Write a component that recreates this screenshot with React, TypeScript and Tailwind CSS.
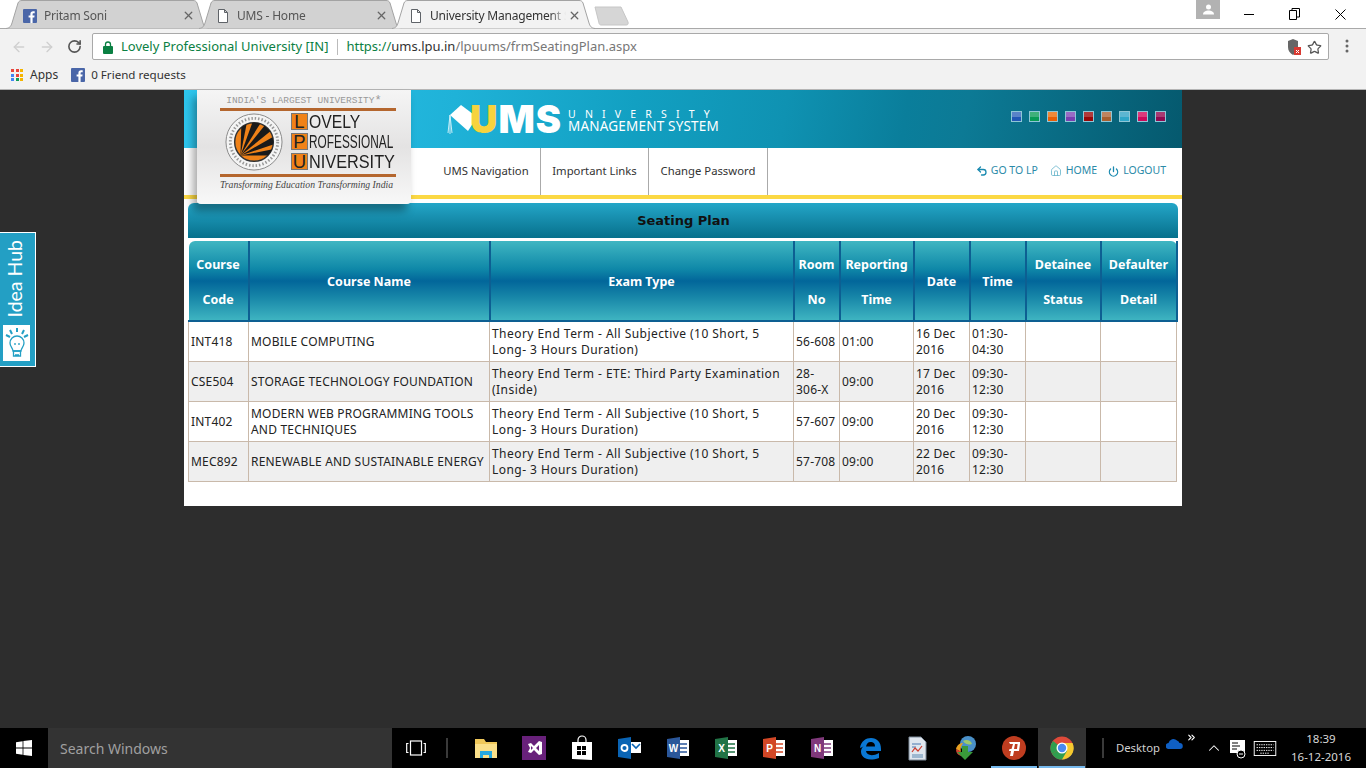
import { ArrowLeft, ArrowRight, ChevronUp, ChevronsRight, Home, Power, RotateCw, Star, Undo2, X } from "lucide-react";

const ui = "font-['Noto_Sans',sans-serif]";

const swatches = [
  "bg-[linear-gradient(#5a83c8_50%,#2257b5_50%)]",
  "bg-[linear-gradient(#3fb07a_50%,#079a55_50%)]",
  "bg-[linear-gradient(#ef8a3a_50%,#e85f06_50%)]",
  "bg-[linear-gradient(#9a6cc4_50%,#7a3fb0_50%)]",
  "bg-[linear-gradient(#b03a3a_50%,#970808_50%)]",
  "bg-[linear-gradient(#bf8560_50%,#a8602f_50%)]",
  "bg-[linear-gradient(#5cb6d2_50%,#2fa6c8_50%)]",
  "bg-[linear-gradient(#dc3a7c_50%,#cc0a5a_50%)]",
  "bg-[linear-gradient(#a83a72_50%,#8f0a50_50%)]",
];

const rows = [
  ["INT418", "MOBILE COMPUTING", "Theory End Term - All Subjective (10 Short, 5 Long- 3 Hours Duration)", "56-608", "01:00", "16 Dec 2016", "01:30-04:30"],
  ["CSE504", "STORAGE TECHNOLOGY FOUNDATION", "Theory End Term - ETE: Third Party Examination (Inside)", "28-306-X", "09:00", "17 Dec 2016", "09:30-12:30"],
  ["INT402", "MODERN WEB PROGRAMMING TOOLS AND TECHNIQUES", "Theory End Term - All Subjective (10 Short, 5 Long- 3 Hours Duration)", "57-607", "09:00", "20 Dec 2016", "09:30-12:30"],
  ["MEC892", "RENEWABLE AND SUSTAINABLE ENERGY", "Theory End Term - All Subjective (10 Short, 5 Long- 3 Hours Duration)", "57-708", "09:00", "22 Dec 2016", "09:30-12:30"],
];

const heads = [
  ["Course", "Code"],
  ["Course Name"],
  ["Exam Type"],
  ["Room", "No"],
  ["Reporting", "Time"],
  ["Date"],
  ["Time"],
  ["Detainee", "Status"],
  ["Defaulter", "Detail"],
];

const colWidths = ["w-[60px]", "w-[241px]", "w-[304px]", "w-[46px]", "w-[74px]", "w-[56px]", "w-[56px]", "w-[75px]", "w-[76px]"];

function FbIcon({ size = 14 }: { size?: number }) {
  return (
    <svg width={size} height={size} viewBox="0 0 14 14" className="shrink-0">
      <rect width="14" height="14" fill="#4a66a8" rx="1" />
      <path d="M9.6 14V8.6h1.7l.3-2.1h-2V5.2c0-.6.2-1 1-1h1.1V2.3c-.2 0-.8-.1-1.6-.1-1.6 0-2.7 1-2.7 2.8v1.5H5.6v2.1h1.8V14z" fill="#fff" />
    </svg>
  );
}

function PageIcon() {
  return (
    <svg width="12" height="14" viewBox="0 0 12 14" className="shrink-0" fill="#fff" stroke="#5f6368">
      <path d="M1.5.5h6l3 3v10h-9zM7.5.5v3h3" />
    </svg>
  );
}

function Tab({ title, active, fav }: { title: string; active?: boolean; fav?: boolean }) {
  return (
    <div className="relative -mr-[10px] h-[28px] w-[203px] shrink-0">
      <svg width="203" height="29" viewBox="0 0 203 29" className="absolute left-0 top-0">
        <path
          d="M0 28.5 C4 28 5 26 6 23 L12 3 C13 1 14 .5 16 .5 H187 C189 .5 190 1 191 3 L197 23 C198 26 199 28 203 28.5"
          fill={active ? "#f2f2f2" : "#d2d2d2"}
          stroke="#a3a3a3"
        />
      </svg>
      <div className="relative flex h-full items-center pl-[17px] pr-[14px] pt-[3px]">
        <div className="flex w-[14px] shrink-0 justify-center">{fav ? <FbIcon size={14} /> : <PageIcon />}</div>
        <span className={`ml-[7px] w-[136px] overflow-hidden whitespace-nowrap text-[12px] tracking-[-0.2px] [mask-image:linear-gradient(90deg,#000_88%,transparent)] ${active ? "text-[#333]" : "text-[#555]"}`}>{title}</span>
        <X size={13} strokeWidth={2.4} className="ml-auto text-[#666]" />
      </div>
    </div>
  );
}

function LogoCard() {
  return (
    <div className="absolute left-[13px] top-0 z-10 h-[114px] w-[214px] rounded-b-[4px] bg-gradient-to-b from-[#f5f5f5] via-[#e4e3e3] to-[#f8f8f8] px-[23px] shadow-[-4px_7px_8px_rgba(0,0,0,0.35)]">
      <div className="mt-[4px] flex h-[14px] items-center justify-center whitespace-nowrap font-['Liberation_Mono',monospace] text-[9.5px] text-[#999]">
        INDIA'S LARGEST UNIVERSITY<span className="text-[12px]">*</span>
      </div>
      <div className="h-[3px] w-[176px] bg-[#b4662e]" />
      <div className="mt-[2px] flex h-[61px]">
        <svg width="58" height="58" viewBox="0 0 60 60" className="ml-[5px] shrink-0">
          <defs>
            <clipPath id="sun">
              <circle cx="30" cy="30" r="20" />
            </clipPath>
          </defs>
          <circle cx="30" cy="30" r="29" fill="#f4f4f4" stroke="#888" strokeWidth="1" />
          <circle cx="30" cy="30" r="20" fill="#f08218" stroke="#333" strokeWidth="1.5" />
          <g clipPath="url(#sun)" fill="#1a1a1a">
            <path d="M16 44 17 8 23 8Z" />
            <path d="M16 44 29 8 37 10Z" />
            <path d="M16 44 41 13 47 19Z" />
            <path d="M16 44 49 25 52 32Z" />
            <path d="M16 44 52 37 51 44Z" />
          </g>
          <circle cx="30" cy="30" r="24.500" fill="none" stroke="#999" strokeWidth="3" strokeDasharray="1.5 2" />
        </svg>
        <div className="ml-[8px] flex flex-col font-['Liberation_Sans',sans-serif] text-[18.5px] leading-[17px] text-[#222]">
          {[
            ["L", "OVELY", "scale-x-[0.85]"],
            ["P", "ROFESSIONAL", "scale-x-[0.64]"],
            ["U", "NIVERSITY", "scale-x-[0.88]"],
          ].map(([a, b, s]) => (
            <div key={a} className="mb-[3px] flex h-[17px] items-center">
              <span className="flex h-[17px] w-[17px] shrink-0 items-center justify-center border border-[#777] bg-[#f08218]">{a}</span>
              <span className={`ml-[1px] origin-left whitespace-nowrap ${s}`}>{b}</span>
            </div>
          ))}
        </div>
      </div>
      <div className="h-[3px] w-[176px] bg-[#b4662e]" />
      <div className="mt-[1px] whitespace-nowrap text-center font-['Liberation_Serif',serif] text-[9.7px] italic leading-[14px] text-[#444]">
        Transforming Education Transforming India
      </div>
    </div>
  );
}

function SiteHeader() {
  return (
    <div className="relative h-[58px] bg-[linear-gradient(100deg,#2ec6ee_0%,#1fb2d8_27%,#12a0c2_45%,#0f92b2_60%,#0a7e9b_72%,#0c7a95_78%,#05596e_100%)] pl-[263px]">
      <div className="flex h-full items-center">
        <svg width="30" height="32" viewBox="0 0 30 32" className="mt-[-1px] shrink-0">
          <path d="M3 12 14 2 30 14 21 28Z" fill="#fff" />
          <path d="M3 12 1 30M3 12 3 31M3 12 5 30" stroke="#c8eef8" strokeWidth="1" />
        </svg>
        <div className="-ml-[7px] flex h-[34px] w-[92px] shrink-0 items-center whitespace-nowrap font-['Inter',sans-serif] text-[38px] font-black leading-none tracking-[1px]">
          <span className="text-[#f7d33e]">U</span>
          <span className="text-white">MS</span>
        </div>
        <div className="ml-[6px] mt-[2px] font-['Noto_Sans',sans-serif] text-white">
          <div className="whitespace-nowrap text-[10.5px] leading-[12px] tracking-[9.2px]">UNIVERSITY</div>
          <div className="whitespace-nowrap text-[13.5px] leading-[13px] tracking-[0.2px]">MANAGEMENT SYSTEM</div>
        </div>
      </div>
      <div className="absolute right-[16px] top-[21px] flex gap-[7px]">
        {swatches.map((s) => (
          <div key={s} className={`h-[11px] w-[11px] border border-[#8fc6d6] ${s}`} />
        ))}
      </div>
    </div>
  );
}

function NavBar() {
  return (
    <div className="flex h-[47px] items-stretch bg-white pl-[246px] pr-[16px] text-[11.3px] text-[#333]">
      <div className="flex w-[111px] items-center justify-center border-r border-[#aaa] pl-[2px]">UMS Navigation</div>
      <div className="flex w-[108px] items-center justify-center border-r border-[#aaa]">Important Links</div>
      <div className="flex w-[119px] items-center justify-center border-r border-[#aaa]">Change Password</div>
      <div className="ml-auto flex items-center pb-[1px] text-[10.5px] text-[#2b8aa8]">
        <Undo2 size={12} strokeWidth={2.6} className="mr-[3px] text-[#1a8ab0]" />
        <span>GO TO LP</span>
        <Home size={12} strokeWidth={1.6} className="ml-[12px] mr-[4px] text-[#63b2c9]" />
        <span>HOME</span>
        <Power size={11} strokeWidth={2.8} className="ml-[11px] mr-[4px] text-[#1a8ab0]" />
        <span>LOGOUT</span>
      </div>
    </div>
  );
}

function SeatingTable() {
  return (
    <table className="ml-[4px] w-[988px] table-fixed border-collapse text-[12px]">
      <colgroup>
        {colWidths.map((w, i) => (
          <col key={i} className={w} />
        ))}
      </colgroup>
      <thead>
        <tr className="h-[80px] bg-[linear-gradient(180deg,#40b6c2_0%,#0f88a8_35%,#02669a_50%,#1786a8_70%,#40b6c2_100%)]">
          {heads.map((h, i) => (
            <th key={i} className={`border-b-2 border-r-2 border-[#0d5f92] px-0 pb-0 text-center text-[12.5px] font-bold leading-[35px] text-white ${h.length === 2 ? "pt-[2px]" : "pt-[1px]"} ${i === 0 ? "rounded-tl-[6px]" : ""} ${i === 8 ? "rounded-tr-[6px]" : ""}`}>
              {h.map((t) => (
                <div key={t}>{t}</div>
              ))}
            </th>
          ))}
        </tr>
      </thead>
      <tbody>
        {rows.map((r, i) => (
          <tr key={r[0]} className={`h-[40px] ${i % 2 ? "bg-[#efefef]" : "bg-white"}`}>
            {[...r, "", ""].map((c, j) => (
              <td key={j} className={`border border-t-0 border-[#c9b9aa] px-[2px] pb-0 pt-[1px] align-middle leading-[16px] text-[#222] ${j === 2 ? "tracking-[0.45px]" : "tracking-[0.2px]"}`}>
                {c}
              </td>
            ))}
          </tr>
        ))}
      </tbody>
    </table>
  );
}

function TaskIcon({ children, active, underline }: { children: React.ReactNode; active?: boolean; underline?: boolean }) {
  return (
    <div className={`relative flex h-[40px] w-[48px] items-center justify-center ${active ? "bg-[#333]" : ""}`}>
      {children}
      {underline && <div className="absolute bottom-0 left-[1px] right-[1px] h-[2px] bg-[#76b9ed]" />}
    </div>
  );
}

function OfficeIcon({ bg, letter }: { bg: string; letter: string }) {
  return (
    <svg width="24" height="24" viewBox="0 0 24 24">
      <rect x="11" y="4" width="12" height="16" fill="#fff" />
      <path d="M13 8h8M13 12h8M13 16h8" stroke={bg} strokeWidth="1.5" />
      <path d="M1 3 L14 1 V23 L1 21 Z" fill={bg} />
      <text x="7.5" y="16" textAnchor="middle" fontSize="10" fontWeight="700" fill="#fff" fontFamily="Liberation Sans, sans-serif">{letter}</text>
    </svg>
  );
}

function Taskbar() {
  return (
    <div className={`flex h-[40px] shrink-0 items-center bg-black text-white ${ui}`}>
      <div className="flex w-[48px] justify-center">
        <svg width="16" height="16" viewBox="0 0 16 16" fill="#fff">
          <path d="M0 2.2 6.6 1.2V7.6H0zM7.4 1.1 16 0V7.6H7.4zM0 8.4H6.6V14.8L0 13.8zM7.4 8.4H16V16L7.4 14.9z" />
        </svg>
      </div>
      <div className="flex h-full w-[344px] items-center bg-[#333] pl-[12px] text-[14px] text-[#a0a0a0]">Search Windows</div>
      <TaskIcon>
        <svg width="20" height="16" viewBox="0 0 20 16" fill="none" stroke="#fff" strokeWidth="1.2">
          <rect x="4.5" y="1" width="11" height="14" />
          <path d="M2.5 3.5H.7v9h1.8M17.5 3.5h1.8v9h-1.8" />
        </svg>
      </TaskIcon>
      <div className="flex w-[22px] pl-[6px]">
        <div className="h-[20px] w-[2px] border-x border-[#3a3a3a]" />
      </div>
      <TaskIcon>
        <svg width="24" height="24" viewBox="0 0 24 24">
          <path d="M1 3h9l2 3h11v16H1z" fill="#f0c85a" />
          <path d="M1 8h22v14H1z" fill="#fbe08a" />
          <path d="M6 22v-7h12v7h-3v-3H9v3z" fill="#27a9e1" />
        </svg>
      </TaskIcon>
      <TaskIcon>
        <svg width="24" height="24" viewBox="0 0 24 24">
          <rect width="24" height="24" fill="#68217a" />
          <path d="M6 8 9 7 12 10 17 5 20 6V18L17 19 12 14 9 17 6 16 8 12ZM9 10V14L11 12ZM17 9 14 12 17 15Z" fill="#fff" />
        </svg>
      </TaskIcon>
      <TaskIcon>
        <svg width="22" height="26" viewBox="0 0 22 26" fill="#fff">
          <path d="M7 7V5a4 4 0 0 1 8 0v2" fill="none" stroke="#fff" strokeWidth="1.2" />
          <path d="M1 7h20v18L1 24z" />
          <path d="M6 11h4v4H6zM11 11h4v4h-4zM6 16h4v4H6zM11 16h4v4h-4z" fill="#000" />
        </svg>
      </TaskIcon>
      <TaskIcon>
        <svg width="24" height="24" viewBox="0 0 24 24">
          <path d="M0 3 13 1V23L0 21Z" fill="#0a64b4" />
          <rect x="13" y="6" width="10" height="11" fill="#fff" />
          <path d="M14 8l4 4 4-4" fill="none" stroke="#0a64b4" strokeWidth="1.6" />
          <circle cx="6.5" cy="12" r="3" fill="none" stroke="#fff" strokeWidth="1.8" />
        </svg>
      </TaskIcon>
      <TaskIcon><OfficeIcon bg="#2b579a" letter="W" /></TaskIcon>
      <TaskIcon><OfficeIcon bg="#217346" letter="X" /></TaskIcon>
      <TaskIcon><OfficeIcon bg="#d24726" letter="P" /></TaskIcon>
      <TaskIcon><OfficeIcon bg="#80397b" letter="N" /></TaskIcon>
      <TaskIcon>
        <svg width="24" height="24" viewBox="0 0 24 24">
          <path d="M2 12C3 5 8 2 13 2c6 0 10 4 10 11v2H8c.5 4 6 6 13 2v5c-3 1.500-6 1.500-8 1.500-7 0-10-4-10-8 0-2 1-4 3-6-1 1-2 2-4 2.500zM8 10.500h9C17 7 15 6 12.500 6 10 6 8.500 8 8 10.500z" fill="#0a78d4" />
        </svg>
      </TaskIcon>
      <TaskIcon>
        <svg width="22" height="26" viewBox="0 0 22 26">
          <path d="M2 2h12l5 5v18H2z" fill="#dfe6ee" stroke="#7d8a99" />
          <path d="M5 9h9M5 12h4" stroke="#4a78b0" />
          <path d="M5 17l3-4 3 3 4-5" fill="none" stroke="#d03a2a" strokeWidth="1.2" />
          <path d="M5 19h11v4H5z" fill="#9db7cf" />
        </svg>
      </TaskIcon>
      <TaskIcon>
        <svg width="26" height="26" viewBox="0 0 26 26">
          <circle cx="15" cy="9" r="8" fill="#4a90c8" />
          <path d="M10 6c3-2 8-1 9 3-3 1-6 1-9-3z" fill="#9ec96a" />
          <path d="M3 14c1-4 4-6 7-6-2 3-3 6-2 9z" fill="#e8a020" />
          <path d="M3 14c0 4 2 6 5 7l-1-5z" fill="#d04030" />
          <path d="M9 11h6v6h5l-8 8-8-8h5z" fill="#3a9a3a" />
        </svg>
      </TaskIcon>
      <TaskIcon underline>
        <svg width="24" height="24" viewBox="0 0 24 24">
          <circle cx="12" cy="12" r="12" fill="#bf3d20" />
          <path d="M7 6h11v2l-1 7h-5l-1 5H8l1-5H7l.5-2h2L11 8H8zM13 8l-1 5h3l.6-5z" fill="#fff" />
        </svg>
      </TaskIcon>
      <TaskIcon active underline>
        <svg width="24" height="24" viewBox="0 0 24 24">
          <circle cx="12" cy="12" r="11.500" fill="#de4a3a" />
          <path d="M12 12 2 18A11.500 11.500 0 0 1 3 5z" fill="#2f9e4f" />
          <path d="M12 12 2 18A11.500 11.500 0 0 0 12 23.500 11.500 11.500 0 0 0 23 9z" fill="#2f9e4f" />
          <path d="M12 7h10.500A11.500 11.500 0 0 1 12 23.500L17 15z" fill="#f6c92f" />
          <circle cx="12" cy="12" r="5.500" fill="#fff" />
          <circle cx="12" cy="12" r="4.200" fill="#4a8af0" />
        </svg>
      </TaskIcon>
      <div className="ml-[16px] h-[20px] w-[2px] border-x border-[#3a3a3a]" />
      <span className="ml-[12px] text-[11.300px] text-[#d0d0d0]">Desktop</span>
      <div className="relative ml-[5px] flex h-full w-[42px]">
        <svg width="17" height="11" viewBox="0 0 17 11" className="mt-[10px] ml-[1px]" fill="#0f5fc4">
          <path d="M3 11a3 3 0 0 1-.5-6A5 5 0 0 1 11 2.500 3.500 3.500 0 0 1 13.500 5 3 3 0 0 1 14 11z" />
        </svg>
        <ChevronsRight size={11} strokeWidth={2.5} className="absolute left-[21px] top-[4px]" />
      </div>
      <ChevronUp size={18} strokeWidth={1.4} className="ml-[-2px]" />
      <svg width="18" height="22" viewBox="0 0 18 22" className="ml-[6px] mt-[3px]">
        <path d="M1 1h15v13H1z" fill="#fff" />
        <path d="M3 4h6M3 7h8M3 10h5" stroke="#000" />
        <circle cx="12" cy="15" r="4" fill="#000" stroke="#fff" />
        <path d="M10 15h4" stroke="#fff" />
      </svg>
      <svg width="24" height="15" viewBox="0 0 24 16" className="ml-[6px]" fill="none" stroke="#fff">
        <rect x=".5" y=".5" width="23" height="15" />
        <path d="M3 4h18M3 7h18M3 10h18M7 13h10" strokeDasharray="1.500 1" />
      </svg>
      <div className="ml-auto mr-[9px] w-[72px] text-center text-[11.500px] leading-[18px] text-[#d8d8d8]">
        <div>18:39</div>
        <div className="whitespace-nowrap">16-12-2016</div>
      </div>
    </div>
  );
}

export default function App() {
  return (
    <div className={`relative flex h-[768px] w-[1366px] flex-col overflow-hidden bg-[#2d2d2d] ${ui}`}>
      {/* browser chrome */}
      <div className="relative flex h-[28px] shrink-0 items-start bg-white pl-[6px]">
        <Tab title="Pritam Soni" fav />
        <Tab title="UMS - Home" />
        <Tab title="University Management S" active />
        <svg width="36" height="20" viewBox="0 0 36 20" className="ml-[9px] mt-[6px]">
          <path d="M1 1h26l7 15c.5 2 0 3-2 3H7c-1 0-2-1-2-2z" fill="#d6d6d6" stroke="#c6c6c6" />
        </svg>
        <div className="absolute right-[146px] top-0 flex h-[19px] w-[24px] items-center justify-center bg-[#b2b2b2]">
          <svg width="11" height="11" viewBox="0 0 11 11" fill="#fff">
            <circle cx="5.500" cy="3" r="2.500" />
            <path d="M0 10.500c0-3 3-4 5.500-4s5.500 1 5.500 4z" />
          </svg>
        </div>
        <div className="absolute right-[20px] top-[8px] flex items-center gap-[35px] text-black">
          <div className="h-px w-[10px] bg-black" />
          <svg width="11" height="12" viewBox="0 0 11 12" fill="none" stroke="#000">
            <path d="M.5 2.500h7v9h-7zM3 2.500V.5h7.500v8.500H7.500" />
          </svg>
          <svg width="11" height="11" viewBox="0 0 11 11" stroke="#000" strokeWidth="1">
            <path d="M.5.5l10 10M10.500.5l-10 10" />
          </svg>
        </div>
      </div>
      <div className="h-[33px] shrink-0 border-t border-[#a9a9a9] bg-[#f2f2f2]">
        <div className="flex h-[32px] items-start pl-[11px] pt-[4px]">
          <ArrowLeft size={16} strokeWidth={2} className="mt-[6px] text-[#cfcfcf]" />
          <ArrowRight size={16} strokeWidth={2} className="ml-[12px] mt-[6px] text-[#cfcfcf]" />
          <RotateCw size={15} strokeWidth={2.6} className="ml-[12px] mt-[6px] text-[#555]" />
          <div className="ml-[10px] flex h-[27px] w-[1237px] items-center rounded-[2px] border border-[#a9a9a9] bg-white pl-[10px] pr-[6px] pt-[1px] text-[13px]">
            <svg width="10" height="13" viewBox="0 0 10 13" className="shrink-0">
              <path d="M2.500 5V3.500a2.500 2.500 0 0 1 5 0V5" fill="none" stroke="#0b8043" strokeWidth="1.300" />
              <rect y="5" width="10" height="8" rx="1" fill="#0b8043" />
            </svg>
            <span className="ml-[8px] text-[#0b8043]">Lovely Professional University [IN]</span>
            <div className="ml-[9px] mr-[8px] h-[16px] w-px bg-[#bbb]" />
            <span className="text-[#0b8043]">https://</span>
            <span className="text-[#333]">ums.lpu.in</span>
            <span className="text-[#777]">/lpuums/frmSeatingPlan.aspx</span>
            <svg width="16" height="18" viewBox="0 0 16 18" className="ml-auto">
              <path d="M1 3l5-2 5 2v6c0 4-2 6-5 8-3-2-5-4-5-8z" fill="#666" />
              <rect x="7" y="9" width="7" height="8" fill="#d93a32" />
              <path d="M9 12l3 3M12 12l-3 3" stroke="#fff" />
            </svg>
            <Star size={15} strokeWidth={2} className="ml-[4px] text-[#555]" />
          </div>
          <svg width="4" height="14" viewBox="0 0 4 14" fill="#666" className="ml-[16px] mt-[6px]">
            <circle cx="2" cy="2" r="1.500" />
            <circle cx="2" cy="7" r="1.500" />
            <circle cx="2" cy="12" r="1.500" />
          </svg>
        </div>
      </div>
      <div className="flex h-[29px] shrink-0 items-center border-b border-[#b5b5b5] bg-[#f2f2f2] pl-[11px] text-[12px] text-[#333]">
        <div className="grid grid-cols-3 gap-[1.500px]">
          {["#e8453c", "#e8453c", "#f4b400", "#4285f4", "#e8453c", "#f4b400", "#4285f4", "#0f9d58", "#f4b400"].map((c, i) => (
            <div key={i} className="h-[3px] w-[3px]" style={{ backgroundColor: c }} />
          ))}
        </div>
        <span className="ml-[7px]">Apps</span>
        <div className="ml-[13px]"><FbIcon size={14} /></div>
        <span className="ml-[6px] text-[11.600px]">0 Friend requests</span>
      </div>

      {/* page */}
      <div className="min-h-0 flex-1">
        <div className="relative ml-[184px] h-[416px] w-[998px] bg-white">
          <LogoCard />
          <SiteHeader />
          <NavBar />
          <div className="h-[4px] bg-[#fbd844]" />
          <div className="ml-[4px] mt-[4px] flex h-[35px] w-[990px] items-center justify-center rounded-t-[6px] bg-gradient-to-b from-[#23a6c8] to-[#06708c] pl-[1px] font-['DejaVu_Sans',sans-serif] text-[13px] font-bold text-[#111]">
            Seating Plan
          </div>
          <div className="h-[3px]" />
          <SeatingTable />
        </div>
      </div>

      {/* idea hub tab */}
      <div className="absolute left-0 top-[232px] flex h-[135px] w-[36px] flex-col items-center border border-l-0 border-white bg-[#239fc4] pr-[2px]">
        <div className="flex h-[92px] items-center justify-center pr-[3px]">
          <span className="-rotate-90 whitespace-nowrap font-['Lato',sans-serif] text-[19.500px] leading-none text-white">Idea Hub</span>
        </div>
        <div className="flex h-[36px] w-[27px] items-center justify-center bg-white">
          <svg width="24" height="32" viewBox="0 0 24 32" fill="none" stroke="#239fc4" strokeWidth="1.300">
            <path d="M12 1v4M5 3l2 4M19 3l-2 4M1 8l4 2M23 8l-4 2" strokeWidth="2" />
            <path d="M8 24c0-3-3-4-3-8a7 7 0 0 1 14 0c0 4-3 5-3 8z" />
            <path d="M8.500 24h7v5h-7zM10 28h4" />
            <path d="M10 16v2M14 16v2" />
          </svg>
        </div>
      </div>

      <Taskbar />
    </div>
  );
}
